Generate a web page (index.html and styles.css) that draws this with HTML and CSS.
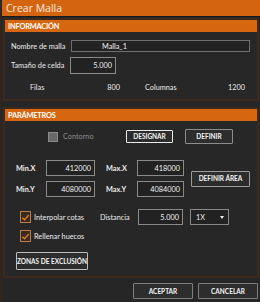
FILE: index.html
```html
<!DOCTYPE html>
<html>
<head>
<meta charset="utf-8">
<link rel="stylesheet" href="styles.css">
</head>
<body>
<div class="window">
  <div class="titlebar">Crear Malla</div>

  <div class="section sec-info">
    <div class="sec-head">INFORMACIÓN</div>
    <div class="row row-name">
      <span class="label lbl-name">Nombre de malla</span>
      <div class="input input-name">Malla_1</div>
    </div>
    <div class="row row-size">
      <span class="label lbl-size">Tamaño de celda</span>
      <div class="input input-size">5.000</div>
    </div>
    <div class="row row-dims">
      <span class="dim-lbl dim-filas">Filas</span>
      <span class="dim-val dim-v1">800</span>
      <span class="dim-lbl dim-cols">Columnas</span>
      <span class="dim-val dim-v2">1200</span>
    </div>
  </div>

  <div class="section sec-param">
    <div class="sec-head">PARÁMETROS</div>
    <div class="row row-contorno">
      <span class="check check-off"></span>
      <span class="check-lbl muted">Contorno</span>
      <button class="btn btn-designar">DESIGNAR</button>
      <button class="btn btn-definir">DEFINIR</button>
    </div>
    <div class="coords">
      <span class="clabel c-minx">Min.X</span>
      <div class="input cin c-minx-in">412000</div>
      <span class="clabel c-maxx">Max.X</span>
      <div class="input cin c-maxx-in">418000</div>
      <span class="clabel c-miny">Min.Y</span>
      <div class="input cin c-miny-in">4080000</div>
      <span class="clabel c-maxy">Max.Y</span>
      <div class="input cin c-maxy-in">4084000</div>
      <button class="btn btn-area">DEFINIR ÁREA</button>
    </div>
    <div class="row row-interp">
      <span class="check check-on"><svg viewBox="0 0 10 10" width="9" height="9"><path d="M1.5 5.2 L4 7.6 L8.6 2.2" fill="none" stroke="#e0801e" stroke-width="1.5"/></svg></span>
      <span class="check-lbl lbl-interp">Interpolar cotas</span>
      <span class="lbl-dist">Distancia</span>
      <div class="input input-dist">5.000</div>
      <div class="select"><span>1X</span><span class="arrow"></span></div>
    </div>
    <div class="row row-rellenar">
      <span class="check check-on"><svg viewBox="0 0 10 10" width="9" height="9"><path d="M1.5 5.2 L4 7.6 L8.6 2.2" fill="none" stroke="#e0801e" stroke-width="1.5"/></svg></span>
      <span class="check-lbl">Rellenar huecos</span>
    </div>
    <div class="row row-zonas">
      <button class="btn btn-zonas">ZONAS DE EXCLUSIÓN</button>
    </div>
  </div>

  <div class="footer">
    <button class="btn btn-foot">ACEPTAR</button>
    <button class="btn btn-foot">CANCELAR</button>
  </div>
</div>
</body>
</html>
```

FILE: styles.css
```css
* { box-sizing: border-box; }
html, body {
  margin: 0;
  padding: 0;
  background: #252525;
}
body {
  width: 260px;
  height: 302px;
  overflow: hidden;
  font-family: "Lato", "Open Sans", sans-serif;
  color: #ececec;
  font-size: 7.3px;
}
.window {
  width: 260px;
  height: 302px;
  background: #262626;
  border-left: 2px solid #2f2620;
}
.titlebar {
  height: 17px;
  background: #d4640f;
  color: #fbeee4;
  font-family: "Open Sans", sans-serif;
  font-size: 10.5px;
  line-height: 17px;
  padding-left: 4px;
  border-bottom: 1px solid #1a1a1a;
}
.section {
  margin: 1px 1px 0 1px;
  border: 2px solid #3c2a1f;
  background: #272727;
}
.sec-param { margin-top: 6px; height: 171px; }
.sec-info { height: 83px; }
.sec-head {
  height: 12px;
  background: #d6660f;
  color: #fff;
  font-weight: bold;
  font-size: 7.4px;
  line-height: 13px;
  padding-left: 3px;
  letter-spacing: -0.2px;
}
.row {
  display: flex;
  align-items: center;
}
.label {
  display: block;
  width: 66px;
  padding-left: 6px;
  white-space: nowrap;
}
.input {
  border: 1px solid #8a8a8a;
  background: #222;
  color: #f2f2f2;
  font-size: 7.3px;
  display: flex;
  align-items: center;
  justify-content: flex-end;
  padding-right: 3px;
}
.row-name { margin-top: 8px; height: 12px; }
.input-name {
  width: 179px;
  height: 12px;
  justify-content: flex-start;
  padding-left: 30px;
  border-color: #6f6f6f;
}
.row-size { margin-top: 5px; height: 17px; }
.lbl-size { width: 65px; }
.input-size { width: 46px; height: 17px; }
.row-dims { margin-top: 8px; height: 10px; }
.dim-lbl, .dim-val { display: block; }
.dim-filas { margin-left: 25px; width: 15px; }
.dim-v1 { margin-left: 60px; width: 15px; text-align: right; }
.dim-cols { margin-left: 25px; width: 32px; }
.dim-v2 { margin-left: 50px; width: 18px; text-align: right; }

.row-contorno { margin-top: 8px; height: 15px; }
.check {
  display: flex;
  align-items: center;
  justify-content: center;
  width: 11px;
  height: 11px;
  flex: none;
}
.check-off {
  margin-left: 43px;
  background: #6a6a6a;
  border: 1px solid #8a8a8a;
  width: 10px;
  height: 10px;
}
.check-lbl { margin-left: 3px; white-space: nowrap; display: block; }
.muted { color: #8d8d8d; margin-left: 5px; width: 38px; }
.btn {
  font-family: "Lato", "Open Sans", sans-serif;
  font-weight: 700;
  font-size: 6.5px;
  color: #f4f4f4;
  background: #2d2d2d;
  border: 1px solid #9b9b9b;
  border-radius: 1px;
  padding: 0;
  display: flex;
  align-items: center;
  justify-content: center;
  white-space: nowrap;
  flex: none;
}
.btn-designar {
  margin-left: 25px;
  width: 47px;
  height: 13px;
  border: 1.5px solid #ececec;
}
.btn-definir {
  margin-left: 12px;
  width: 48px;
  height: 15px;
  border-color: #8d8d8d;
}
.coords {
  margin-top: 16px;
  display: grid;
  grid-template-columns: 30px 49px 42px 47px 66px;
  grid-template-rows: 16px 16px;
  row-gap: 5px;
  column-gap: 0;
  padding-left: 11px;
  align-items: center;
}
.clabel { font-weight: bold; }
.c-maxx, .c-maxy { padding-left: 11px; }
.cin { height: 16px; }
.btn-area {
  grid-column: 5;
  grid-row: 1 / span 2;
  margin-left: 7px;
  width: 59px;
  height: 16px;
  align-self: center;
}
.row-interp { margin-top: 12px; height: 16px; }
.check-on {
  margin-left: 15px;
  border: 1px solid #b97d4a;
  background: #3a2a1e;
  width: 11px;
  height: 12px;
}
.lbl-interp { width: 66px; }
.lbl-dist { width: 38px; display: block; }
.input-dist { width: 45px; height: 16px; }
.select {
  margin-left: 7px;
  width: 39px;
  height: 16px;
  border: 1px solid #8a8a8a;
  background: #222;
  font-size: 7.3px;
  display: flex;
  align-items: center;
  padding-left: 5px;
}
.select .arrow {
  margin-left: 15px;
  width: 0;
  height: 0;
  border-left: 2.5px solid transparent;
  border-right: 2.5px solid transparent;
  border-top: 3px solid #eee;
}
.row-rellenar { margin-top: 5px; height: 12px; }
.row-zonas { margin-top: 10px; }
.btn-zonas {
  margin-left: 11px;
  width: 72px;
  height: 18px;
  border-color: #bcbcbc;
}
.footer {
  display: flex;
  justify-content: flex-end;
  gap: 5px;
  margin-top: 5px;
  padding-right: 2px;
}
.btn-foot {
  width: 60px;
  height: 16px;
  border-color: #7e7e7e;
}
```
